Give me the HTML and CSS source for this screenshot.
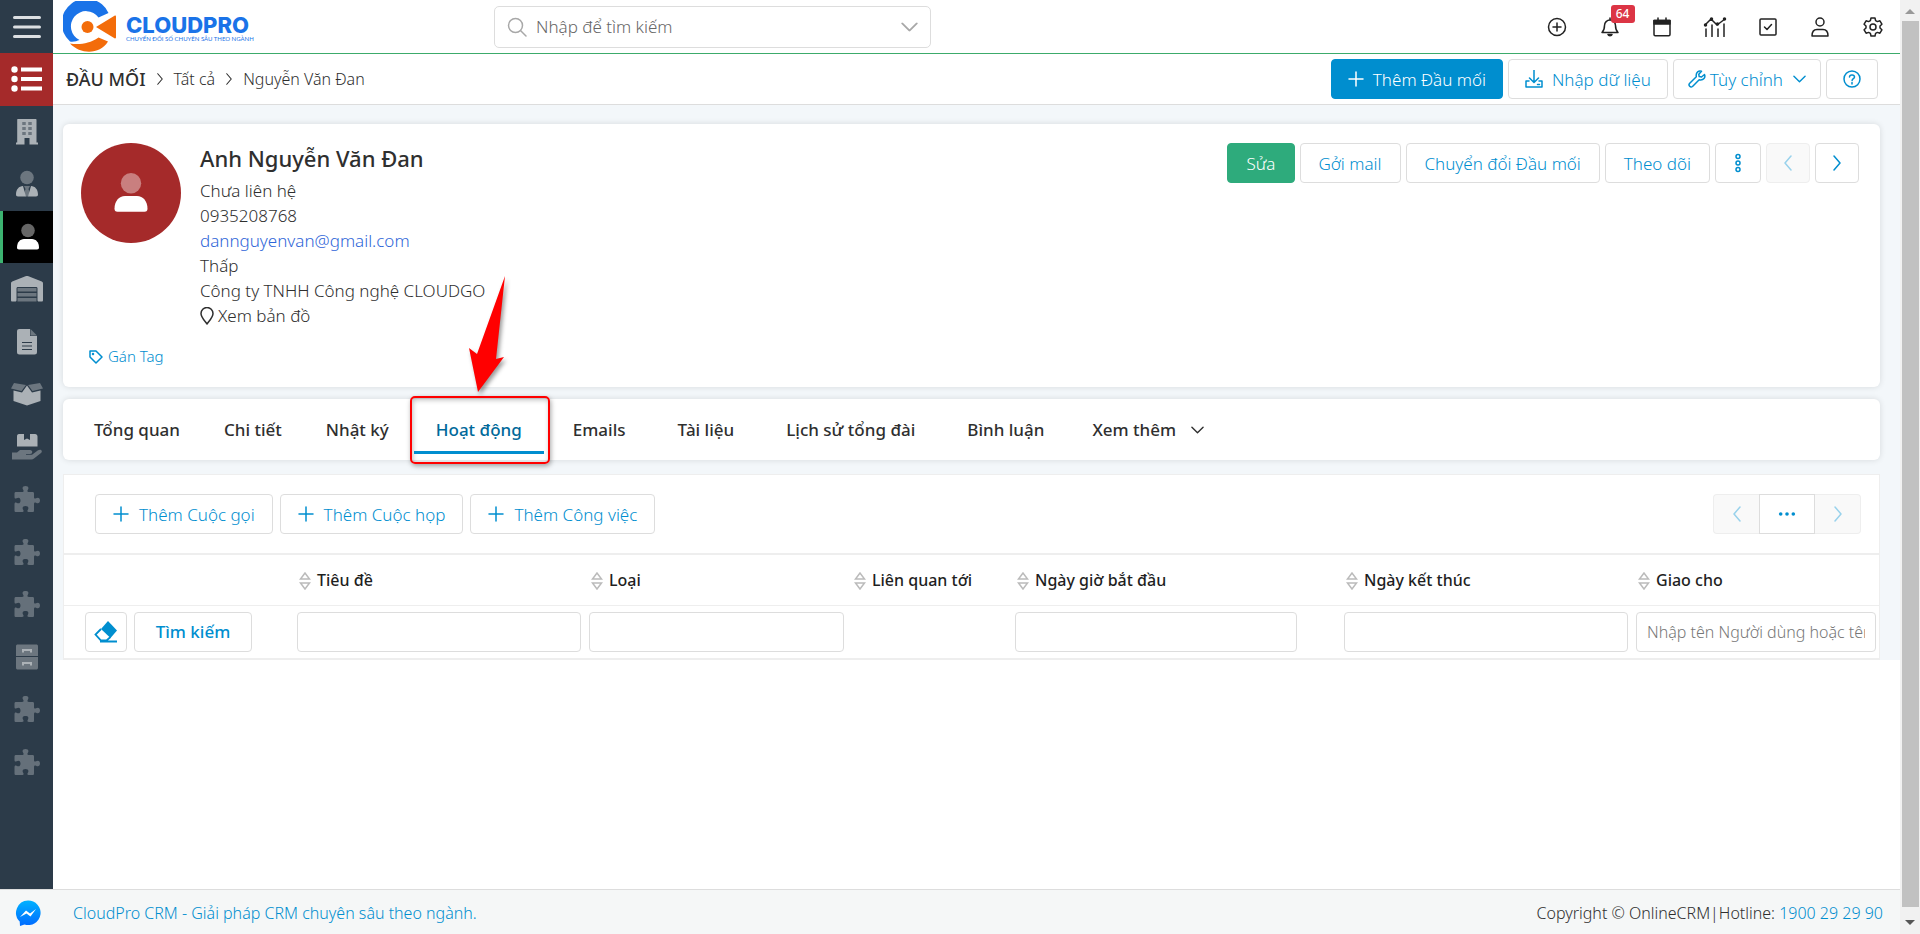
FILE: index.html
```html
<!DOCTYPE html>
<html lang="vi">
<head>
<meta charset="utf-8">
<title>Nguyễn Văn Đan - CloudPro CRM</title>
<link rel="stylesheet" href="styles.css">
</head>
<body>
<svg class="defs" aria-hidden="true">
  <symbol id="puzzle" viewBox="0 0 28 28"><path d="M3 7h6c1.400 0 2-.8 1.300-2C8.600 2.500 10 1 12.500 1S16.400 2.500 14.700 5c-.7 1.200-.1 2 1.300 2h3.500c1 0 1.500.5 1.500 1.500V12c0 1.400.8 2 2 1.300 2.500-1.600 4 .2 4 2.200s-1.500 3.800-4 2.200c-1.200-.7-2-.1-2 1.300v6.500c0 1-.5 1.500-1.500 1.500H16c-1.400 0-2-.8-1.300-2 1.600-2.500.3-4-2.200-4s-3.800 1.500-2.200 4c.7 1.200.1 2-1.300 2H3c-1 0-1.500-.5-1.500-1.500V19c0-1.400.8-2 2-1.300 2.500 1.500 4 .3 4-2.200s-1.500-3.700-4-2.200c-1.200.7-2 .1-2-1.300V8.500C1.500 7.500 2 7 3 7z"/></symbol>
  <symbol id="person" viewBox="0 0 24 28"><circle class="dim" cx="12" cy="7.500" r="6.800"/><path d="M1 24.500C1 19.500 4 16 8 16h8c4 0 7 3.500 7 8.500 0 1.300-.6 2-2 2H3c-1.400 0-2-.7-2-2z"/></symbol>
  <symbol id="plus" viewBox="0 0 16 16"><path d="M8 1v14M1 8h14"/></symbol>
  <symbol id="left" viewBox="0 0 10 16"><path d="M8 1L2 8l6 7"/></symbol>
  <symbol id="right" viewBox="0 0 10 16"><path d="M2 1l6 7-6 7"/></symbol>
  <symbol id="down" viewBox="0 0 14 8"><path d="M1 1l6 6 6-6"/></symbol>
  <symbol id="sort" viewBox="0 0 12 18"><path d="M6 1L1.500 7h9zM6 17l-4.500-6h9z"/></symbol>
</svg>
<div class="app">
  <div class="page">
    <div class="main-row">
      <nav class="sidebar" aria-label="Menu chính">
        <button class="side-toggle" aria-label="Menu"><svg class="ico28 line thick" viewBox="0 0 28 24"><path d="M1.500 2.500h25M1.500 12h25M1.500 21.500h25"/></svg></button>
        <div class="side-list">
          <a class="side-item list" href="#" aria-label="Đầu mối"><svg width="32" height="26" viewBox="0 0 32 26"><circle cx="3.500" cy="3.500" r="3.200"/><circle cx="3.500" cy="13" r="3.200"/><circle cx="3.500" cy="22.500" r="3.200"/><path d="M10 1.500h21v4H10zM10 11h21v4H10zM10 20.500h21v4H10z"/></svg></a>
          <a class="side-item" href="#" aria-label="Công ty"><svg width="24" height="28" viewBox="0 0 24 28"><path fill-rule="evenodd" d="M3 1h17.500c.8 0 1 .3 1 1v22.500H23v2H14.500V20h-5v6.500H1v-2h1.200V2c0-.7.2-1 .8-1zM7.500 4v3h3V4zm6 0v3h3V4zm-6 5v3h3V9zm6 0v3h3V9zm-6 5v3h3v-3zm6 0v3h3v-3z"/><path class="dim" d="M7.500 4h3v3h-3zm6 0h3v3h-3zm-6 5h3v3h-3zm6 0h3v3h-3zm-6 5h3v3h-3zm6 0h3v3h-3z"/></svg></a>
          <a class="side-item" href="#" aria-label="Người liên hệ"><svg width="24" height="28" viewBox="0 0 24 28"><circle class="dim" cx="12" cy="7.500" r="6.800"/><path class="dim" d="M9 16h6l-1.500 3 1.500 5-2 2.500h-2L9 24l1.500-5z"/><path d="M8 16l3 10.500H3c-1.400 0-2-.7-2-2C1 19.500 4 16 8 16zm8 0l-3 10.500h8c1.400 0 2-.7 2-2C23 19.500 20 16 16 16z"/></svg></a>
          <a class="side-item active" href="#" aria-label="Đầu mối"><svg width="24" height="28"><use href="#person"/></svg></a>
          <a class="side-item" href="#" aria-label="Kho"><svg width="34" height="28" viewBox="0 0 34 28"><path d="M1 8.500c0-1 .4-1.500 1.200-2L15.500 1.300c1-.4 2-.4 3 0l13.300 5.200c.8.500 1.200 1 1.200 2V25c0 1-.4 1.500-1.400 1.500h-2.700c-.9 0-1.400-.5-1.400-1.500V13.500c0-1-.5-1.500-1.500-1.500H8c-1 0-1.500.5-1.500 1.500V25c0 1-.5 1.500-1.400 1.500H2.400C1.400 26.500 1 26 1 25z"/><path class="dim" d="M7.500 13h19v3.500h-19zm0 5h19v3.500h-19zm0 5h19v3.500h-19z"/></svg></a>
          <a class="side-item" href="#" aria-label="Báo giá"><svg width="22" height="28" viewBox="0 0 22 28"><path fill-rule="evenodd" d="M3.500 1H14v7h7v16c0 1.700-.8 2.500-2.500 2.500h-15C1.800 26.500 1 25.700 1 24V3.500C1 1.800 1.800 1 3.500 1zM6 14v1h10v-1zm0 3.500v1h10v-1zM6 21v1h10v-1z"/><path class="dim" d="M14.500 1L21 7.500h-6.500z"/></svg></a>
          <a class="side-item" href="#" aria-label="Sản phẩm"><svg width="34" height="26" viewBox="0 0 34 26"><path class="dim" d="M4 2l12 2-4.500 6L1 7.500zm26 0L18 4l4.500 6L33 7.500z"/><path d="M17 4.500l5 7 8.500-2V20L17 24.500 3.500 20V9.500l8.500 2z"/></svg></a>
          <a class="side-item" href="#" aria-label="Giao hàng"><svg width="32" height="30" viewBox="0 0 32 30"><path d="M8 2h5v6l3-1.500L19 8V2h5c1.500 0 2.500 1 2.500 2.500v10H6V4.500C6 3 6.500 2 8 2z"/><path class="dim" d="M1 20.500h5L9 18h10c3 0 3 4 0 4h-4v.8h6l6-4.500c3-1.800 5 .8 3 2.700l-7 5.500c-.8.700-1.500 1-2.500 1H1z"/></svg></a>
          <a class="side-item faded" href="#" aria-label="Mô-đun 1"><svg class="ico28"><use href="#puzzle"/></svg></a>
          <a class="side-item faded" href="#" aria-label="Mô-đun 2"><svg class="ico28"><use href="#puzzle"/></svg></a>
          <a class="side-item faded" href="#" aria-label="Mô-đun 3"><svg class="ico28"><use href="#puzzle"/></svg></a>
          <a class="side-item" href="#" aria-label="Lưu trữ"><svg width="24" height="28" viewBox="0 0 24 28"><path class="dim" d="M3 1.500h18c1.500 0 2 .5 2 2V13H1V3.500c0-1.500.5-2 2-2zM1 14h22v10.500c0 1.500-.5 2-2 2H3c-1.500 0-2-.5-2-2z"/><path d="M7 6h10v3.500h-2V8H9v1.500H7zm0 13h10v3.500h-2V21H9v1.500H7z"/></svg></a>
          <a class="side-item faded" href="#" aria-label="Mô-đun 4"><svg class="ico28"><use href="#puzzle"/></svg></a>
          <a class="side-item faded" href="#" aria-label="Mô-đun 5"><svg class="ico28"><use href="#puzzle"/></svg></a>
        </div>
      </nav>
      <div class="content">
        <header class="topbar">
          <a class="logo" href="#" aria-label="CloudPro">
            <svg class="logo-mark" viewBox="0 0 54 51"><path fill="#1a73e8" d="M45.500 12A24.500 24.500 0 1 0 7 40.500c3 .9 7-.5 9.500-1.500A15.200 15.200 0 1 1 35.500 16.500z"/><path fill="#f36c0a" d="M7 42.500c9 1.500 19 .5 28.500-6l9.500 4C37 53.500 18 54 7 42.500zM33 26L51.500 14.800c1-.5 1.500 0 1.500 1v20.400c0 1-.5 1.500-1.500 1z"/><circle cx="24.500" cy="26" r="6" fill="#f36c0a"/></svg>
            <span class="logo-words"><span class="logo-name">CLOUDPRO</span><span class="logo-sub">CHUYỂN ĐỔI SỐ CHUYÊN SÂU THEO NGÀNH</span></span>
          </a>
          <div class="search">
            <svg class="line gray" width="20" height="20" viewBox="0 0 20 20"><circle cx="8.500" cy="8.500" r="7"/><path d="M13.500 13.500L19 19"/></svg>
            <input class="search-input" type="search" placeholder="Nhập để tìm kiếm" aria-label="Tìm kiếm">
            <svg class="line gray" width="17" height="10" viewBox="0 0 14 8"><use href="#down"/></svg>
          </div>
          <div class="top-icons">
            <button class="top-btn" aria-label="Thêm nhanh"><svg class="ico20 line" viewBox="0 0 20 20"><circle cx="10" cy="10" r="8.500"/><path d="M10 6v8M6 10h8"/></svg></button>
            <button class="top-btn" aria-label="Thông báo"><svg class="ico20 line" viewBox="0 0 20 20"><path d="M2 15.500c2-2 2.500-3.500 2.500-7a5.500 5.500 0 0 1 11 0c0 3.500.5 5 2.500 7zM10 3V1"/><path fill="currentColor" d="M8 17.500h4c-.5 1.500-3.500 1.500-4 0z"/></svg><span class="badge">64</span></button>
            <button class="top-btn" aria-label="Lịch"><svg class="ico20 line" viewBox="0 0 20 20"><path d="M2 3.500h16v14c0 .8-.4 1.200-1.200 1.200H3.200c-.8 0-1.200-.4-1.200-1.200zM6 1v3M14 1v3"/><path fill="currentColor" d="M2 3.500h16V7H2z"/></svg></button>
            <button class="top-btn" aria-label="Báo cáo"><svg class="line" width="24" height="20" viewBox="0 0 24 20"><path d="M2 8l6-6 6 6 8-6M3 12v7.500M9 8v11.500M15 12v7.500M21 7v12.500"/><g fill="currentColor"><circle cx="2.500" cy="8" r="1"/><circle cx="8.500" cy="2" r="1"/><circle cx="14.500" cy="7" r="1"/><circle cx="21.500" cy="2" r="1"/></g></svg></button>
            <button class="top-btn" aria-label="Công việc"><svg class="ico20 line" viewBox="0 0 20 20"><rect x="2" y="2" width="16" height="16" rx="1"/><path d="M6.500 10l2.500 2.500 4.500-5"/></svg></button>
            <button class="top-btn" aria-label="Tài khoản"><svg class="ico20 line" viewBox="0 0 20 20"><circle cx="10" cy="5" r="4"/><path d="M2 19c0-4.500 2-6.500 5-6.500h6c3 0 5 2 5 6.500z"/></svg></button>
            <button class="top-btn" aria-label="Cài đặt"><svg class="ico20 line" viewBox="0 0 20 20"><path d="M8 1h4l.6 2.600 1.800 1 2.500-.8 2 3.400-1.900 1.800v2l1.900 1.800-2 3.400-2.500-.8-1.800 1L12 19H8l-.6-2.600-1.800-1-2.500.8-2-3.400L3 11V9L1.100 7.200l2-3.400 2.500.8 1.800-1z"/><circle cx="10" cy="10" r="3"/></svg></button>
          </div>
        </header>
        <div class="crumb-bar">
          <div class="crumbs">
            <a class="crumb-main" href="#">ĐẦU MỐI</a><svg class="line chev" viewBox="0 0 10 16"><use href="#right"/></svg>
            <a href="#">Tất cả</a><svg class="line chev" viewBox="0 0 10 16"><use href="#right"/></svg>
            <span>Nguyễn Văn Đan</span>
          </div>
          <div class="btn-row">
            <button class="btn primary"><svg class="ico16 line lead"><use href="#plus"/></svg>Thêm Đầu mối</button>
            <button class="btn"><svg class="line lead" width="18" height="18" viewBox="0 0 18 18"><path d="M9 0v12M4.500 8L9 12.500 13.500 8M4 11H1v6h16v-6h-3M12.500 14.500h2"/></svg>Nhập dữ liệu</button>
            <button class="btn snug"><svg class="line" width="18" height="18" viewBox="0 0 18 18"><path d="M16.500 4.500l-3 2.500-2.300-.4-.4-2.300L13.500 1.300C11 .3 7.500 2 8.300 6.800L1.500 13.500c-1.500 2 1 4.500 3 3l6.700-6.800c4.500 1 6.500-2.500 5.300-5.200z"/></svg>Tùy chỉnh<svg class="line trail" width="13" height="8"><use href="#down"/></svg></button>
            <button class="btn" aria-label="Trợ giúp"><svg class="line" width="18" height="18" viewBox="0 0 18 18"><circle cx="9" cy="9" r="8"/><path d="M6.500 7c.2-3 5-2.500 5 0 0 1.700-2.400 1.700-2.400 3.500M9 12.500V14"/></svg></button>
          </div>
        </div>
        <main class="workspace">
          <section class="card profile">
            <div class="avatar"><svg width="36" height="42" viewBox="0 0 24 28"><use href="#person"/></svg></div>
            <div class="info">
              <h1 class="name">Anh Nguyễn Văn Đan</h1>
              <p>Chưa liên hệ</p>
              <p>0935208768</p>
              <p><a class="mail" href="#">dannguyenvan@gmail.com</a></p>
              <p>Thấp</p>
              <p>Công ty TNHH Công nghệ CLOUDGO</p>
              <p><a class="map" href="#"><svg class="line" width="14" height="18" viewBox="0 0 14 18"><path d="M7 17C4 13 1 10 1 6.500a6 6 0 0 1 12 0C13 10 10 13 7 17z"/></svg>Xem bản đồ</a></p>
            </div>
            <div class="btn-row record-actions">
              <button class="btn success">Sửa</button>
              <button class="btn">Gởi mail</button>
              <button class="btn">Chuyển đổi Đầu mối</button>
              <button class="btn">Theo dõi</button>
              <button class="btn" aria-label="Thêm"><svg class="line" width="8" height="20" viewBox="0 0 8 20"><circle cx="4" cy="3.500" r="2"/><circle cx="4" cy="10" r="2"/><circle cx="4" cy="16.500" r="2"/></svg></button>
              <button class="btn step" disabled aria-label="Trước"><svg class="line chev"><use href="#left"/></svg></button>
              <button class="btn step" aria-label="Sau"><svg class="line chev"><use href="#right"/></svg></button>
            </div>
            <a class="tag" href="#"><svg class="line" width="14" height="14" viewBox="0 0 14 14"><path d="M1 1h6l6 6-6 6-6-6z"/><circle cx="4" cy="4" r=".5"/></svg>Gán Tag</a>
          </section>
          <nav class="card tabs" aria-label="Hồ sơ">
            <a class="tab" href="#">Tổng quan</a>
            <a class="tab" href="#">Chi tiết</a>
            <a class="tab" href="#">Nhật ký</a>
            <a class="tab current" href="#">Hoạt động
              <span class="callout"></span>
              <svg class="arrow" viewBox="0 0 40 118"><path fill="#f00" d="M36 1L27 84l8-2L9 117 0 73l8 6z"/></svg>
            </a>
            <a class="tab wide" href="#">Emails</a>
            <a class="tab wide" href="#">Tài liệu</a>
            <a class="tab wide" href="#">Lịch sử tổng đài</a>
            <a class="tab wide" href="#">Bình luận</a>
            <a class="tab" href="#">Xem thêm<svg class="line more" width="13" height="8"><use href="#down"/></svg></a>
          </nav>
          <section class="panel">
            <div class="panel-tools">
              <div class="btn-row tools">
                <button class="btn"><svg class="ico16 line lead"><use href="#plus"/></svg>Thêm Cuộc gọi</button>
                <button class="btn"><svg class="ico16 line lead"><use href="#plus"/></svg>Thêm Cuộc họp</button>
                <button class="btn"><svg class="ico16 line lead"><use href="#plus"/></svg>Thêm Công việc</button>
              </div>
              <div class="pager">
                <button class="btn" disabled aria-label="Trang trước"><svg class="line chev"><use href="#left"/></svg></button>
                <button class="btn" aria-label="Chọn trang"><svg width="18" height="4" viewBox="0 0 20 4"><circle cx="3" cy="2" r="2"/><circle cx="10" cy="2" r="2"/><circle cx="17" cy="2" r="2"/></svg></button>
                <button class="btn" disabled aria-label="Trang sau"><svg class="line chev"><use href="#right"/></svg></button>
              </div>
            </div>
            <table class="grid">
              <colgroup><col class="c-act"><col class="c-mid"><col class="c-type"><col class="c-rel"><col class="c-start"><col class="c-mid"><col class="c-own"></colgroup>
              <thead><tr>
                <td></td>
                <th><svg class="sort"><use href="#sort"/></svg>Tiêu đề</th>
                <th><svg class="sort"><use href="#sort"/></svg>Loại</th>
                <th><svg class="sort"><use href="#sort"/></svg>Liên quan tới</th>
                <th><svg class="sort"><use href="#sort"/></svg>Ngày giờ bắt đầu</th>
                <th><svg class="sort"><use href="#sort"/></svg>Ngày kết thúc</th>
                <th><svg class="sort"><use href="#sort"/></svg>Giao cho</th>
              </tr></thead>
              <tbody><tr>
                <td><div class="filter-actions"><button class="btn icon-btn" aria-label="Xóa bộ lọc"><svg width="24" height="22" viewBox="0 0 24 22"><path d="M14 0l9 9.500L16.500 17 7 8z"/><path fill="none" stroke="currentColor" stroke-width="1.800" d="M7 8l-5.500 5.500L7 19.500h5.500l4-3.500M6 20.500h17"/></svg></button><button class="btn strong">Tìm kiếm</button></div></td>
                <td><input class="field" type="text" aria-label="Tiêu đề"></td>
                <td><input class="field" type="text" aria-label="Loại"></td>
                <td></td>
                <td><input class="field narrow" type="text" aria-label="Ngày giờ bắt đầu"></td>
                <td><input class="field" type="text" aria-label="Ngày kết thúc"></td>
                <td><input class="field" type="text" placeholder="Nhập tên Người dùng hoặc tên Nhóm" aria-label="Giao cho"></td>
              </tr></tbody>
            </table>
          </section>
        </main>
      </div>
    </div>
    <footer class="footer">
      <svg class="messenger" viewBox="0 0 26 26"><defs><linearGradient id="mg" x1="0" y1="0" x2="0" y2="1"><stop offset="0" stop-color="#00b2ff"/><stop offset="1" stop-color="#006aff"/></linearGradient></defs><path fill="url(#mg)" d="M13 .5a12.300 12.300 0 1 1-3.500 24L5 26l-.3-4.500A12.300 12.300 0 0 1 13 .500z"/><path fill="#fff" d="M5 17l6-6.500 4 3 6-4.500-5.500 7.500-4-3z"/></svg>
      <a class="foot-link" href="#">CloudPro CRM - Giải pháp CRM chuyên sâu theo ngành.</a>
      <p class="copyright">Copyright © OnlineCRM|Hotline: <a class="foot-link" href="#">1900 29 29 90</a></p>
    </footer>
  </div>
  <div class="scrollbar" aria-hidden="true"><span class="sb-up"></span><span class="sb-thumb"></span><span class="sb-down"></span></div>
</div>
</body>
</html>
```
FILE: styles.css
```css
* { box-sizing: border-box; }
body {
  margin: 0;
  font-family: "Noto Sans", "Open Sans", sans-serif;
  font-size: 17px;
  font-weight: 300;
  line-height: 25px;
  color: #2f2f2f;
  background: #fff;
}
a { color: inherit; text-decoration: none; }
p, h1 { margin: 0; }
button, input { font: inherit; color: inherit; }
button { cursor: pointer; }
svg { flex: none; fill: currentColor; }
.defs { position: absolute; width: 0; height: 0; }
.line { fill: none; stroke: currentColor; stroke-width: 1.5; stroke-linecap: round; stroke-linejoin: round; }
.thick { stroke-width: 3; }
.gray { color: #a8a8a8; }
.ico28 { width: 28px; height: 28px; }
.ico20 { width: 20px; height: 20px; }
.ico16 { width: 16px; height: 16px; }
.chev { width: 10px; height: 16px; }

.app { display: grid; grid-template-columns: minmax(0, 1fr) 20px; min-height: 100vh; }
.page { display: flex; flex-direction: column; }
.main-row { flex: 1; display: flex; }
.content { flex: 1; min-width: 0; }

.sidebar { width: 53px; background: #2c3b49; flex: none; }
.side-toggle { width: 100%; height: 53px; border: 0; padding: 0; background: none; color: #dcdfe2; display: flex; align-items: center; justify-content: center; }
.side-list { display: grid; grid-template-rows: repeat(14, 1fr); height: 735px; }
.side-item { display: flex; align-items: center; justify-content: center; color: #abb1b6; }
.side-item .dim { opacity: .5; }
.list { background: #a52a2a; color: #fff; }
.active { background: #000; color: #fff; border-left: 3px solid #3cb371; }
.dim { opacity: .4; }
.faded { color: #65707a; }

.topbar { height: 54px; border-bottom: 1px solid #3cab6b; display: flex; align-items: center; padding: 0 1px 0 10px; }
.logo { display: flex; align-items: center; gap: 9px; width: 431px; flex: none; }
.logo-mark { width: 54px; height: 51px; }
.logo-words { display: flex; flex-direction: column; padding-top: 4px; color: #1a73e8; white-space: nowrap; }
.logo-name { font: 800 22px/20px Inter, sans-serif; }
.logo-sub { font: 400 6px/8px Lato, sans-serif; }
.search { width: 437px; height: 42px; border: 1px solid #ddd; border-radius: 5px; display: flex; align-items: center; gap: 9px; padding: 0 12px; }
.search-input { flex: 1; min-width: 0; border: 0; outline: 0; padding: 0; background: none; }
.search-input::placeholder { color: #666; }
.top-icons { display: flex; width: 368px; margin-left: auto; }
.top-btn { position: relative; flex: 1; height: 53px; padding: 0; border: 0; background: none; display: flex; align-items: center; justify-content: center; color: #222; }
.badge { position: absolute; left: 27px; top: 5px; min-width: 24px; height: 18px; border-radius: 3px; background: #dc3545; color: #fff; font-size: 12px; line-height: 18px; font-weight: 500; }

.crumb-bar { height: 51px; border-bottom: 1px solid #ddd; display: flex; align-items: center; justify-content: space-between; padding: 0 22px 0 13px; }
.crumbs { display: flex; align-items: center; gap: 9px; font-size: 16px; }
.crumbs .chev { height: 12px; }
.crumb-main { font-size: 18px; font-weight: 500; }
.btn-row { display: flex; gap: 5px; }
.btn {
  height: 40px; padding: 0 16px; border: 1px solid #ddd; border-radius: 4px; background: #fff; color: #008ecf;
  display: inline-flex; align-items: center; justify-content: center; white-space: nowrap;
}
.btn:disabled { background: #f9f9f9; border-color: #eee; color: #99d2ec; }
.snug { padding: 0 14px; gap: 4px; }
.lead { margin-right: 9px; }
.trail { margin-left: 6px; }
.record-actions .btn { padding: 0 18px; }
.record-actions .step { width: 44px; padding: 0; }
.btn.primary { background: #008ecf; border-color: #008ecf; color: #fff; }
.btn.success { background: #2eab7c; border-color: #2eab7c; color: #fff; }
.strong { font-weight: 500; }

.workspace { background: #f3f7fa; padding: 19px 20px 0 10px; display: flex; flex-direction: column; }
.card { background: #fff; border-radius: 6px; box-shadow: 0 0 6px rgba(0, 0, 0, .12); }
.profile { display: grid; grid-template-columns: 100px 1fr auto; column-gap: 19px; padding: 19px 21px 18px 18px; margin-bottom: 12px; align-items: start; }
.avatar { width: 100px; height: 100px; border-radius: 50%; background: #a52a2a; color: #fff; display: flex; align-items: center; justify-content: center; }
.name { font-size: 22px; line-height: 30px; font-weight: 500; color: #2f2f2f; margin-bottom: 5px; }
.mail { color: #2f66d8; }
.map { display: flex; align-items: center; gap: 4px; }
.tag { grid-column: 1 / -1; margin: 16px 8px 0; display: flex; align-items: center; gap: 5px; font-size: 15px; color: #008ecf; }

.tabs { height: 61px; margin-bottom: 14px; padding: 0 9px; display: flex; font-size: 17px; font-weight: 500; position: relative; z-index: 1; }
.tab { padding: 0 22px; display: flex; align-items: center; white-space: nowrap; }
.wide { padding: 0 26px; }
.current { position: relative; padding: 0 25px; color: #00699a; }
.current::after { content: ""; position: absolute; left: 3px; right: 3px; bottom: 6px; height: 3px; background: #008ecf; }
.callout { position: absolute; inset: -3px -3px -4px -1px; border: 2px solid #f00; border-radius: 5px; box-shadow: 1px 2px 5px rgba(0, 0, 0, .35), inset 1px 2px 5px rgba(0, 0, 0, .25); }
.arrow { position: absolute; left: 58px; bottom: 67px; width: 40px; height: 118px; filter: drop-shadow(2px 3px 2px rgba(0, 0, 0, .4)); }
.more { margin-left: 15px; }

.panel { background: #fff; border: 1px solid #eee; }
.panel-tools { display: flex; justify-content: space-between; padding: 19px 18px 19px 31px; }
.tools { gap: 7px; }
.tools .btn { padding: 0 17px; }
.tools .lead { margin-right: 10px; }
.pager { display: flex; }
.pager .btn { width: 46px; padding: 0; border-radius: 0; }
.pager .btn:first-child { border-radius: 4px 0 0 4px; border-right: 0; }
.pager .btn:nth-child(2) { width: 56px; }
.pager .btn:last-child { border-radius: 0 4px 4px 0; border-left: 0; }
.grid { width: 100%; table-layout: fixed; border-collapse: collapse; border-top: 2px solid #eee; }
.c-act { width: 229px; }
.c-mid { width: 292px; }
.c-type { width: 263px; }
.c-rel { width: 163px; }
.c-start { width: 329px; }
.c-own { width: 248px; }
.grid th { height: 51px; padding: 2px 0 0 6px; text-align: left; font-weight: 500; font-size: 16px; white-space: nowrap; color: #1f1f1f; }
.grid thead tr { border-bottom: 1px solid #eee; }
.grid tbody td { padding: 6px 4px; }
.grid tbody tr { border-bottom: 1px solid #eee; }
.sort { width: 12px; height: 18px; margin: -2px 6px 0 0; vertical-align: middle; fill: none; stroke: #bbb; stroke-width: 1.5; }
.filter-actions { display: flex; gap: 7px; padding-left: 17px; }
.icon-btn { width: 42px; padding: 0; }
.filter-actions .strong { width: 118px; }
.field { display: block; width: 100%; height: 40px; border: 1px solid #ddd; border-radius: 4px; background: #fff; padding: 0 10px; font-size: 16px; }
.field::placeholder { color: #777; }
.narrow { width: 88%; }

.footer { height: 45px; background: #f5f7f7; border-top: 1px solid #ddd; display: flex; align-items: center; font-size: 16px; padding: 2px 17px 0 15px; }
.messenger { width: 26px; height: 26px; margin-right: 32px; }
.foot-link { color: #008ecf; }
.copyright { margin-left: auto; }

.scrollbar { background: #f1f1f1; display: flex; flex-direction: column; align-items: center; padding: 9px 0; gap: 7px; }
.sb-up, .sb-down { border: 5px solid transparent; }
.sb-up { border-top: 0; border-bottom-color: #999; }
.sb-down { border-bottom: 0; border-top-color: #555; }
.sb-thumb { width: 17px; flex: 1; background: #c1c1c1; margin-bottom: 6px; }
```
